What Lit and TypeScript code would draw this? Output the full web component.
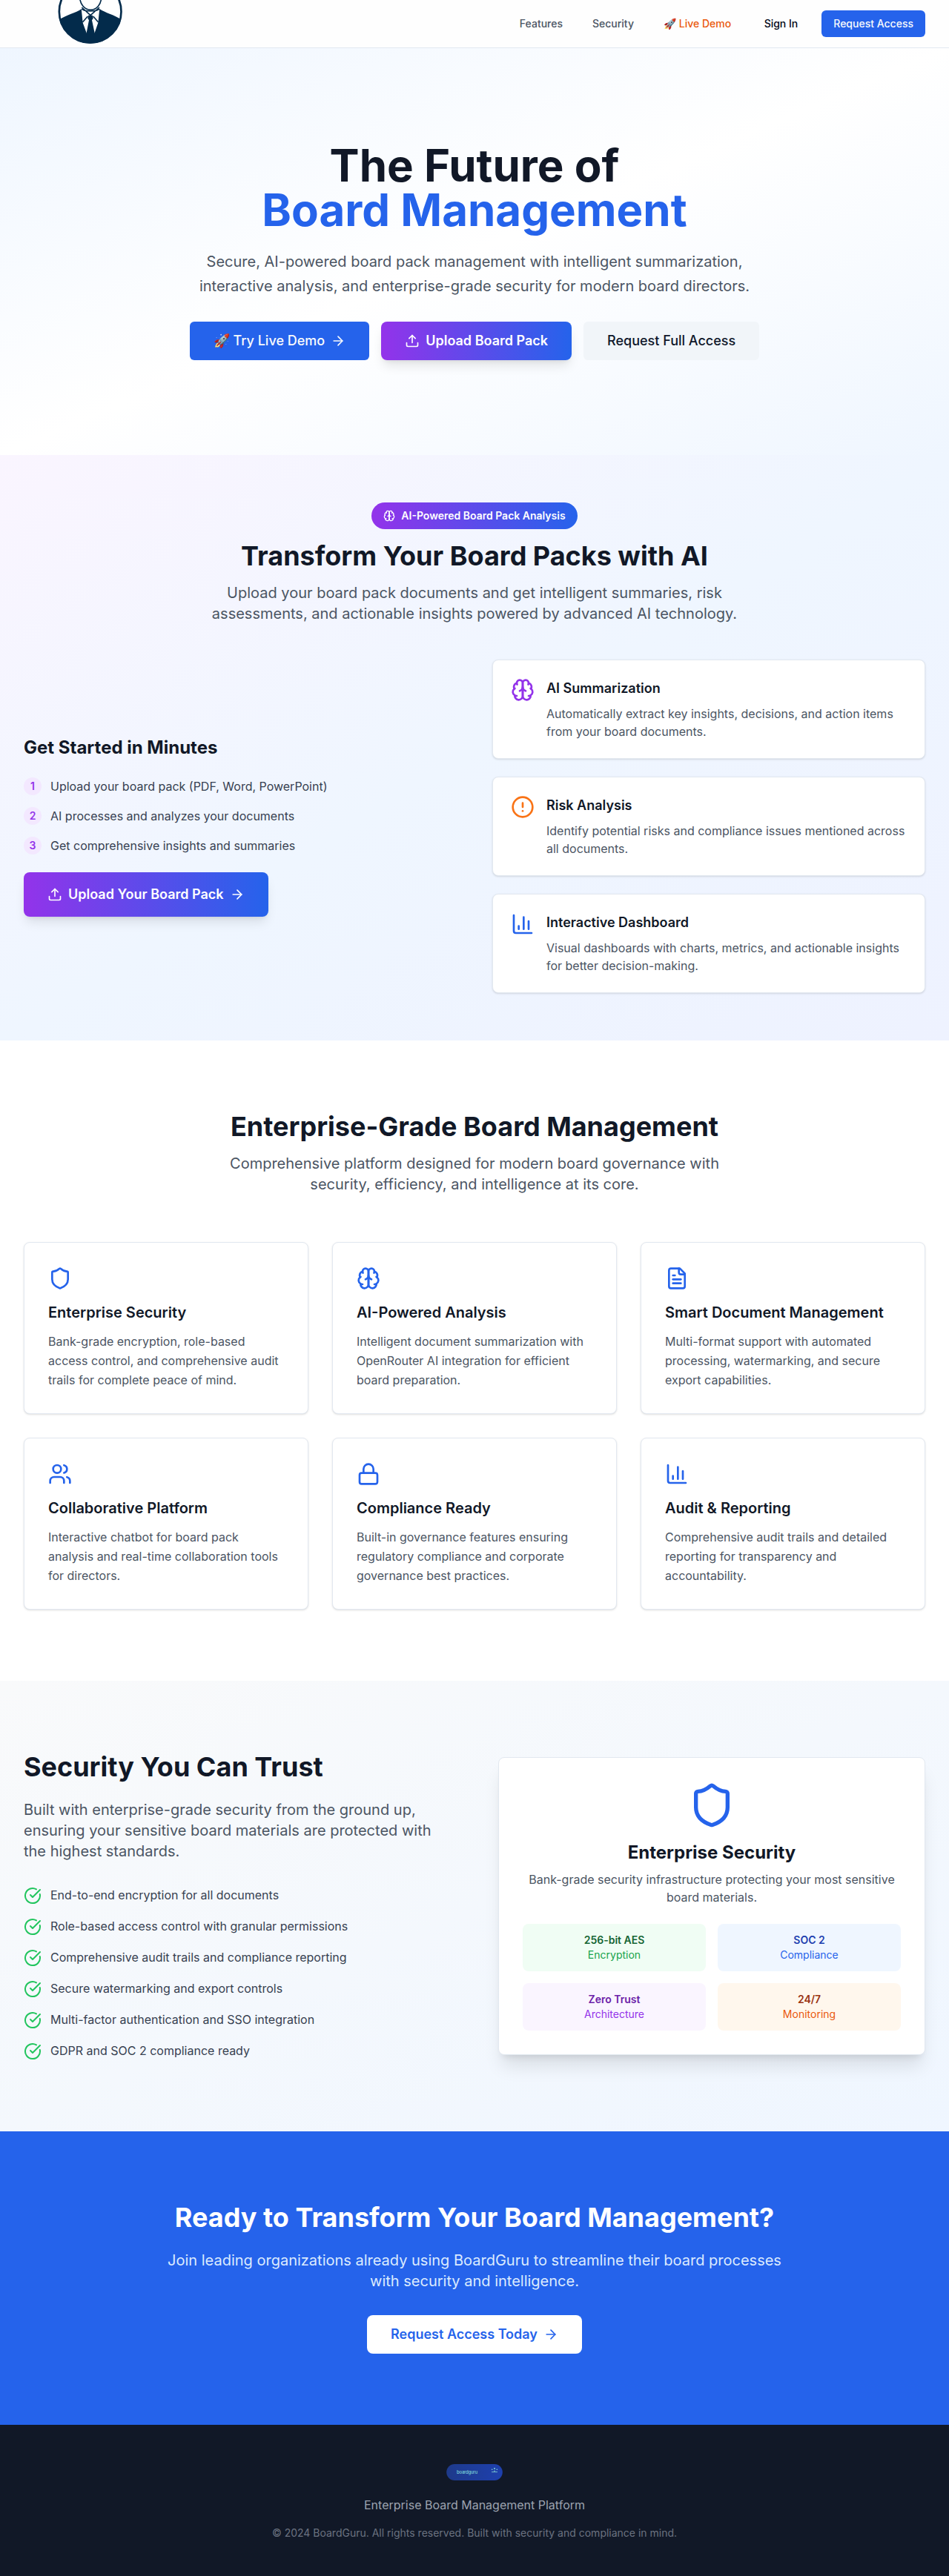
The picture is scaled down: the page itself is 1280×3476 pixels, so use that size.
import { LitElement, html, css, svg } from "lit";
import { customElement, property } from "lit/decorators.js";

const ICONS: Record<string, unknown> = {
  arrow: svg`<path d="M5 12h14"/><path d="m12 5 7 7-7 7"/>`,
  upload: svg`<path d="M12 3v12"/><path d="m17 8-5-5-5 5"/><path d="M21 15v4a2 2 0 0 1-2 2H5a2 2 0 0 1-2-2v-4"/>`,
  brain: svg`<path d="M12 5a3 3 0 1 0-5.997.125 4 4 0 0 0-2.526 5.77 4 4 0 0 0 .556 6.588A4 4 0 1 0 12 18Z"/><path d="M12 5a3 3 0 1 1 5.997.125 4 4 0 0 1 2.526 5.77 4 4 0 0 1-.556 6.588A4 4 0 1 1 12 18Z"/><path d="M15 13a4.5 4.5 0 0 1-3-4 4.5 4.5 0 0 1-3 4"/><path d="M17.599 6.5a3 3 0 0 0 .399-1.375"/><path d="M6.003 5.125A3 3 0 0 0 6.401 6.5"/><path d="M3.477 10.896a4 4 0 0 1 .585-.396"/><path d="M19.938 10.5a4 4 0 0 1 .585.396"/><path d="M6 18a4 4 0 0 1-1.967-.516"/><path d="M19.967 17.484A4 4 0 0 1 18 18"/>`,
  alert: svg`<circle cx="12" cy="12" r="10"/><path d="M12 8v4"/><path d="M12 16h.01"/>`,
  chart: svg`<path d="M3 3v16a2 2 0 0 0 2 2h16"/><path d="M18 17V9"/><path d="M13 17V5"/><path d="M8 17v-3"/>`,
  shield: svg`<path d="M20 13c0 5-3.5 7.5-7.66 8.95a1 1 0 0 1-.67-.01C7.5 20.5 4 18 4 13V6a1 1 0 0 1 1-1c2 0 4.5-1.2 6.24-2.72a1.17 1.17 0 0 1 1.52 0C14.51 3.81 17 5 19 5a1 1 0 0 1 1 1z"/>`,
  users: svg`<path d="M16 21v-2a4 4 0 0 0-4-4H6a4 4 0 0 0-4 4v2"/><circle cx="9" cy="7" r="4"/><path d="M22 21v-2a4 4 0 0 0-3-3.87"/><path d="M16 3.13a4 4 0 0 1 0 7.75"/>`,
  lock: svg`<rect width="18" height="11" x="3" y="11" rx="2"/><path d="M7 11V7a5 5 0 0 1 10 0v4"/>`,
  file: svg`<path d="M15 2H6a2 2 0 0 0-2 2v16a2 2 0 0 0 2 2h12a2 2 0 0 0 2-2V7Z"/><path d="M14 2v4a2 2 0 0 0 2 2h4"/><path d="M10 9H8"/><path d="M16 13H8"/><path d="M16 17H8"/>`,
  check: svg`<path d="M21.801 10A10 10 0 1 1 17 3.335"/><path d="m9 11 3 3L22 4"/>`,
};

@customElement("line-icon")
export class LineIcon extends LitElement {
  @property() name = "";
  static styles = css`
    :host { display: block; flex: none; width: 20px; height: 20px; }
    svg { display: block; width: 100%; height: 100%; fill: none; stroke: currentColor; stroke-width: 2; stroke-linecap: round; stroke-linejoin: round; }
  `;
  render() {
    return html`<svg viewBox="0 0 24 24">${ICONS[this.name]}</svg>`;
  }
}

const INSIGHTS = [
  { icon: "brain", tone: "purple", title: "AI Summarization", text: "Automatically extract key insights, decisions, and action items from your board documents." },
  { icon: "alert", tone: "orange", title: "Risk Analysis", text: "Identify potential risks and compliance issues mentioned across all documents." },
  { icon: "chart", tone: "blue", title: "Interactive Dashboard", text: "Visual dashboards with charts, metrics, and actionable insights for better decision-making." },
];

const STEPS = [
  "Upload your board pack (PDF, Word, PowerPoint)",
  "AI processes and analyzes your documents",
  "Get comprehensive insights and summaries",
];

const FEATURES = [
  { icon: "shield", title: "Enterprise Security", text: "Bank-grade encryption, role-based access control, and comprehensive audit trails for complete peace of mind." },
  { icon: "brain", title: "AI-Powered Analysis", text: "Intelligent document summarization with OpenRouter AI integration for efficient board preparation." },
  { icon: "file", title: "Smart Document Management", text: "Multi-format support with automated processing, watermarking, and secure export capabilities." },
  { icon: "users", title: "Collaborative Platform", text: "Interactive chatbot for board pack analysis and real-time collaboration tools for directors." },
  { icon: "lock", title: "Compliance Ready", text: "Built-in governance features ensuring regulatory compliance and corporate governance best practices." },
  { icon: "chart", title: "Audit & Reporting", text: "Comprehensive audit trails and detailed reporting for transparency and accountability." },
];

const CHECKS = [
  "End-to-end encryption for all documents",
  "Role-based access control with granular permissions",
  "Comprehensive audit trails and compliance reporting",
  "Secure watermarking and export controls",
  "Multi-factor authentication and SSO integration",
  "GDPR and SOC 2 compliance ready",
];

const TILES = [
  { tone: "t-green", title: "256-bit AES", text: "Encryption" },
  { tone: "t-blue", title: "SOC 2", text: "Compliance" },
  { tone: "t-purple", title: "Zero Trust", text: "Architecture" },
  { tone: "t-orange", title: "24/7", text: "Monitoring" },
];

@customElement("app-root")
export class AppRoot extends LitElement {
  static styles = css`
    :host { display: block; font-family: Inter, "Liberation Sans", sans-serif; font-size: 16px; line-height: 24px; color: #111827; background: #fff; }
    * { box-sizing: border-box; }
    h1, h2, h3, h4, p { margin: 0; }

    .header { height: 65px; border-bottom: 1px solid #e2e8f0; background: #fefefe; display: flex; justify-content: space-between; align-items: center; padding: 0 32px; overflow: hidden; }
    .logo { display: block; width: 110px; height: 64px; margin-left: 38px; }
    .menu { display: flex; align-items: center; font-size: 14px; line-height: 20px; font-weight: 500; color: #4b5563; }
    .links { display: flex; gap: 40px; }
    .links .demo { color: #ea580c; }
    .signin { margin: 0 32px 0 44.5px; color: #020617; }
    .access { height: 36px; padding: 8px 16px; border-radius: 6px; background: #2563eb; color: #f8fafc; }

    .hero { padding: 128px 32px; text-align: center; background: linear-gradient(to bottom right, #eff6ff, #ffffff, #eff6ff); }
    h1 { font-size: 60px; line-height: 60px; font-weight: 700; }
    h1 span { display: block; color: #2563eb; }
    .lead { font-size: 20px; line-height: 32.5px; color: #4b5563; width: 768px; margin: 24px auto 32px; }
    .actions { display: flex; justify-content: center; gap: 16px; }
    .btn { display: inline-flex; align-items: center; gap: 8px; height: 52px; padding: 0 32px; border-radius: 6px; font-size: 18px; line-height: 28px; font-weight: 500; white-space: nowrap; }
    .primary { background: #2563eb; color: #f8fafc; }
    .ghost { background: #f1f5f9; color: #0f172a; }
    .grad { background: linear-gradient(to right, #9333ea, #2563eb); color: #fff; font-weight: 600; border-radius: 8px; box-shadow: 0 10px 15px -3px rgba(0,0,0,.1), 0 4px 6px -4px rgba(0,0,0,.1); }
    .tall { height: 60px; }

    h2 { font-size: 36px; line-height: 40px; font-weight: 700; }
    .center { text-align: center; }
    .sub { font-size: 20px; line-height: 28px; color: #4b5563; }
    .center .sub { width: 672px; margin: 16px auto 0; }
    .ai .center .sub { width: 728px; }

    .ai { padding: 64px 32px; background: linear-gradient(to bottom right, #faf5ff, #eff6ff, #eef2ff); }
    .pill { display: flex; width: fit-content; margin: 0 auto 16px; gap: 8px; align-items: center; height: 36px; padding: 0 16px; border-radius: 18px; color: #fff; font-size: 14px; line-height: 20px; font-weight: 600; background: linear-gradient(to right, #9333ea, #2563eb); }
    .pill line-icon { width: 16px; height: 16px; }
    .split { display: grid; grid-template-columns: 1fr 1fr; align-items: center; }
    .ai .split { gap: 48px; margin-top: 48px; }
    h3 { font-size: 24px; line-height: 32px; font-weight: 700; }
    .steps { display: grid; gap: 16px; margin: 24px 0; color: #374151; }
    .step { display: flex; align-items: center; gap: 12px; }
    .num { width: 24px; height: 24px; border-radius: 12px; background: #f3e8ff; color: #9333ea; font-size: 14px; font-weight: 600; text-align: center; }
    .stack { display: grid; gap: 24px; }
    .card { background: #fff; border: 1px solid #e2e8f0; border-radius: 8px; box-shadow: 0 1px 3px rgba(0,0,0,.1), 0 1px 2px -1px rgba(0,0,0,.1); }
    .insight { display: flex; gap: 16px; padding: 24px; }
    .insight line-icon, .feature line-icon { width: 32px; height: 32px; }
    .insight h4 { font-size: 18px; line-height: 28px; font-weight: 600; margin-bottom: 8px; }
    .insight p { color: #4b5563; }
    .purple { color: #9333ea; } .orange { color: #f97316; } .blue { color: #2563eb; }

    .features { padding: 96px 32px; }
    .grid { display: grid; grid-template-columns: repeat(3, 1fr); gap: 32px; margin-top: 64px; }
    .feature { padding: 32px; }
    .feature h4 { font-size: 20px; line-height: 28px; font-weight: 600; margin: 16px 0 12px; }
    .feature p { line-height: 26px; color: #4b5563; }

    .security { padding: 96px 32px; background: linear-gradient(to bottom right, #f9fafb, #eff6ff); }
    .security .split { gap: 64px; }
    .security .sub { margin: 24px 0 32px; }
    .checks { display: grid; gap: 16px; color: #374151; line-height: 26px; }
    .check { display: flex; gap: 12px; height: 26px; }
    .check line-icon { width: 24px; height: 24px; margin-top: 2px; color: #22c55e; }
    .trust { padding: 32px; text-align: center; box-shadow: 0 20px 25px -5px rgba(0,0,0,.1), 0 8px 10px -6px rgba(0,0,0,.1); }
    .trust line-icon { width: 64px; height: 64px; margin: 0 auto 16px; }
    .trust p { color: #4b5563; margin: 8px 0 24px; }
    .tiles { display: grid; grid-template-columns: 1fr 1fr; gap: 16px; font-size: 14px; line-height: 20px; }
    .tile { padding: 12px; border-radius: 8px; }
    .tile b { display: block; font-weight: 600; }
    .t-green { background: #f0fdf4; color: #16a34a; } .t-green b { color: #166534; }
    .t-blue { background: #eff6ff; color: #2563eb; } .t-blue b { color: #1e40af; }
    .t-purple { background: #faf5ff; color: #9333ea; } .t-purple b { color: #6b21a8; }
    .t-orange { background: #fff7ed; color: #ea580c; } .t-orange b { color: #9a3412; }

    .cta { padding: 96px 32px; background: #2563eb; color: #fff; text-align: center; display: flex; flex-direction: column; align-items: center; }
    .cta p { font-size: 20px; line-height: 28px; color: #dbeafe; width: 848px; margin: 24px 0 32px; }
    .white { background: #fff; color: #2563eb; font-weight: 600; border-radius: 8px; }

    .footer { background: #111827; padding: 48px 32px; text-align: center; color: #9ca3af; }
    .footer svg { display: block; margin: 0 auto 16px; }
    .brand { font-family: Inter, sans-serif; font-size: 6px; font-weight: 500; fill: #7dd3d8; }
    .copy { margin-top: 16px; font-size: 14px; line-height: 20px; color: #6b7280; }
  `;

  private renderLogo() {
    return html`<svg class="logo" viewBox="0 0 330 192">
      <defs><clipPath id="disc"><circle cx="155" cy="47" r="129"/></clipPath></defs>
      <circle cx="155" cy="47" r="129" fill="#fff"/>
      <g clip-path="url(#disc)">
        <path fill="#032b4b" d="M20 86 C60 58 95 54 120 36 L193 36 C218 54 252 58 292 86 V192 H20Z"/>
        <path fill="#fff" d="M119 34 L125 92 L141 136 L156 80 L172 136 L187 92 L193 34Z"/>
        <path fill="#032b4b" d="M147 62 H165 L167 74 L162 82 L174 138 V150 H139 V138 L150 82 L145 74Z"/>
        <path fill="#fff" stroke="#032b4b" stroke-width="5" d="M112 -20 C112 20 134 40 157 40 C180 40 201 20 201 -20"/>
        <path fill="none" stroke="#032b4b" stroke-width="5" d="M121 30 L156 62 L192 30 M121 36 C132 48 180 48 192 36 M124 90 L145 66 M188 90 L167 66"/>
      </g>
      <circle cx="155" cy="47" r="125.500" fill="none" stroke="#032b4b" stroke-width="8"/>
    </svg>`;
  }

  render() {
    return html`
      <header class="header">
        ${this.renderLogo()}
        <nav class="menu">
          <div class="links"><span>Features</span><span>Security</span><span class="demo">🚀 Live Demo</span></div>
          <span class="signin">Sign In</span>
          <span class="access">Request Access</span>
        </nav>
      </header>

      <section class="hero">
        <h1>The Future of<span>Board Management</span></h1>
        <p class="lead">Secure, AI-powered board pack management with intelligent summarization, interactive analysis, and enterprise-grade security for modern board directors.</p>
        <div class="actions">
          <span class="btn primary">🚀 Try Live Demo<line-icon name="arrow"></line-icon></span>
          <span class="btn grad"><line-icon name="upload"></line-icon>Upload Board Pack</span>
          <span class="btn ghost">Request Full Access</span>
        </div>
      </section>

      <section class="ai">
        <div class="center">
          <div class="pill"><line-icon name="brain"></line-icon>AI-Powered Board Pack Analysis</div>
          <h2>Transform Your Board Packs with AI</h2>
          <p class="sub">Upload your board pack documents and get intelligent summaries, risk assessments, and actionable insights powered by advanced AI technology.</p>
        </div>
        <div class="split">
          <div>
            <h3>Get Started in Minutes</h3>
            <div class="steps">
              ${STEPS.map((s, i) => html`<div class="step"><span class="num">${i + 1}</span><span>${s}</span></div>`)}
            </div>
            <span class="btn grad tall"><line-icon name="upload"></line-icon>Upload Your Board Pack<line-icon name="arrow"></line-icon></span>
          </div>
          <div class="stack">
            ${INSIGHTS.map((c) => html`<div class="card insight">
              <line-icon class=${c.tone} name=${c.icon}></line-icon>
              <div><h4>${c.title}</h4><p>${c.text}</p></div>
            </div>`)}
          </div>
        </div>
      </section>

      <section class="features">
        <div class="center">
          <h2>Enterprise-Grade Board Management</h2>
          <p class="sub">Comprehensive platform designed for modern board governance with security, efficiency, and intelligence at its core.</p>
        </div>
        <div class="grid">
          ${FEATURES.map((c) => html`<div class="card feature">
            <line-icon class="blue" name=${c.icon}></line-icon>
            <h4>${c.title}</h4><p>${c.text}</p>
          </div>`)}
        </div>
      </section>

      <section class="security">
        <div class="split">
          <div>
            <h2>Security You Can Trust</h2>
            <p class="sub">Built with enterprise-grade security from the ground up, ensuring your sensitive board materials are protected with the highest standards.</p>
            <div class="checks">
              ${CHECKS.map((c) => html`<div class="check"><line-icon name="check"></line-icon><span>${c}</span></div>`)}
            </div>
          </div>
          <div class="card trust">
            <line-icon class="blue" name="shield"></line-icon>
            <h3>Enterprise Security</h3>
            <p>Bank-grade security infrastructure protecting your most sensitive board materials.</p>
            <div class="tiles">
              ${TILES.map((t) => html`<div class="tile ${t.tone}"><b>${t.title}</b>${t.text}</div>`)}
            </div>
          </div>
        </div>
      </section>

      <section class="cta">
        <h2>Ready to Transform Your Board Management?</h2>
        <p>Join leading organizations already using BoardGuru to streamline their board processes with security and intelligence.</p>
        <span class="btn white">Request Access Today<line-icon name="arrow"></line-icon></span>
      </section>

      <footer class="footer">
        <svg width="76" height="32" viewBox="0 0 76 32">
          <defs><linearGradient id="badge"><stop stop-color="#1e3a8a"/><stop offset="1" stop-color="#1e40af"/></linearGradient></defs>
          <rect x="0.200" y="5" width="75.600" height="22" rx="11" fill="url(#badge)"/>
          <text class="brand" x="14" y="18" textLength="28">boardguru</text>
          <g fill="#86d9d6">
            <circle cx="65" cy="11" r="1"/><circle cx="61.700" cy="12.300" r=".8"/><circle cx="68.300" cy="12.300" r=".8"/>
            <circle cx="65" cy="14.200" r=".8"/><rect x="61" y="15.300" width="8" height=".8"/>
          </g>
        </svg>
        <p>Enterprise Board Management Platform</p>
        <p class="copy">© 2024 BoardGuru. All rights reserved. Built with security and compliance in mind.</p>
      </footer>
    `;
  }
}
